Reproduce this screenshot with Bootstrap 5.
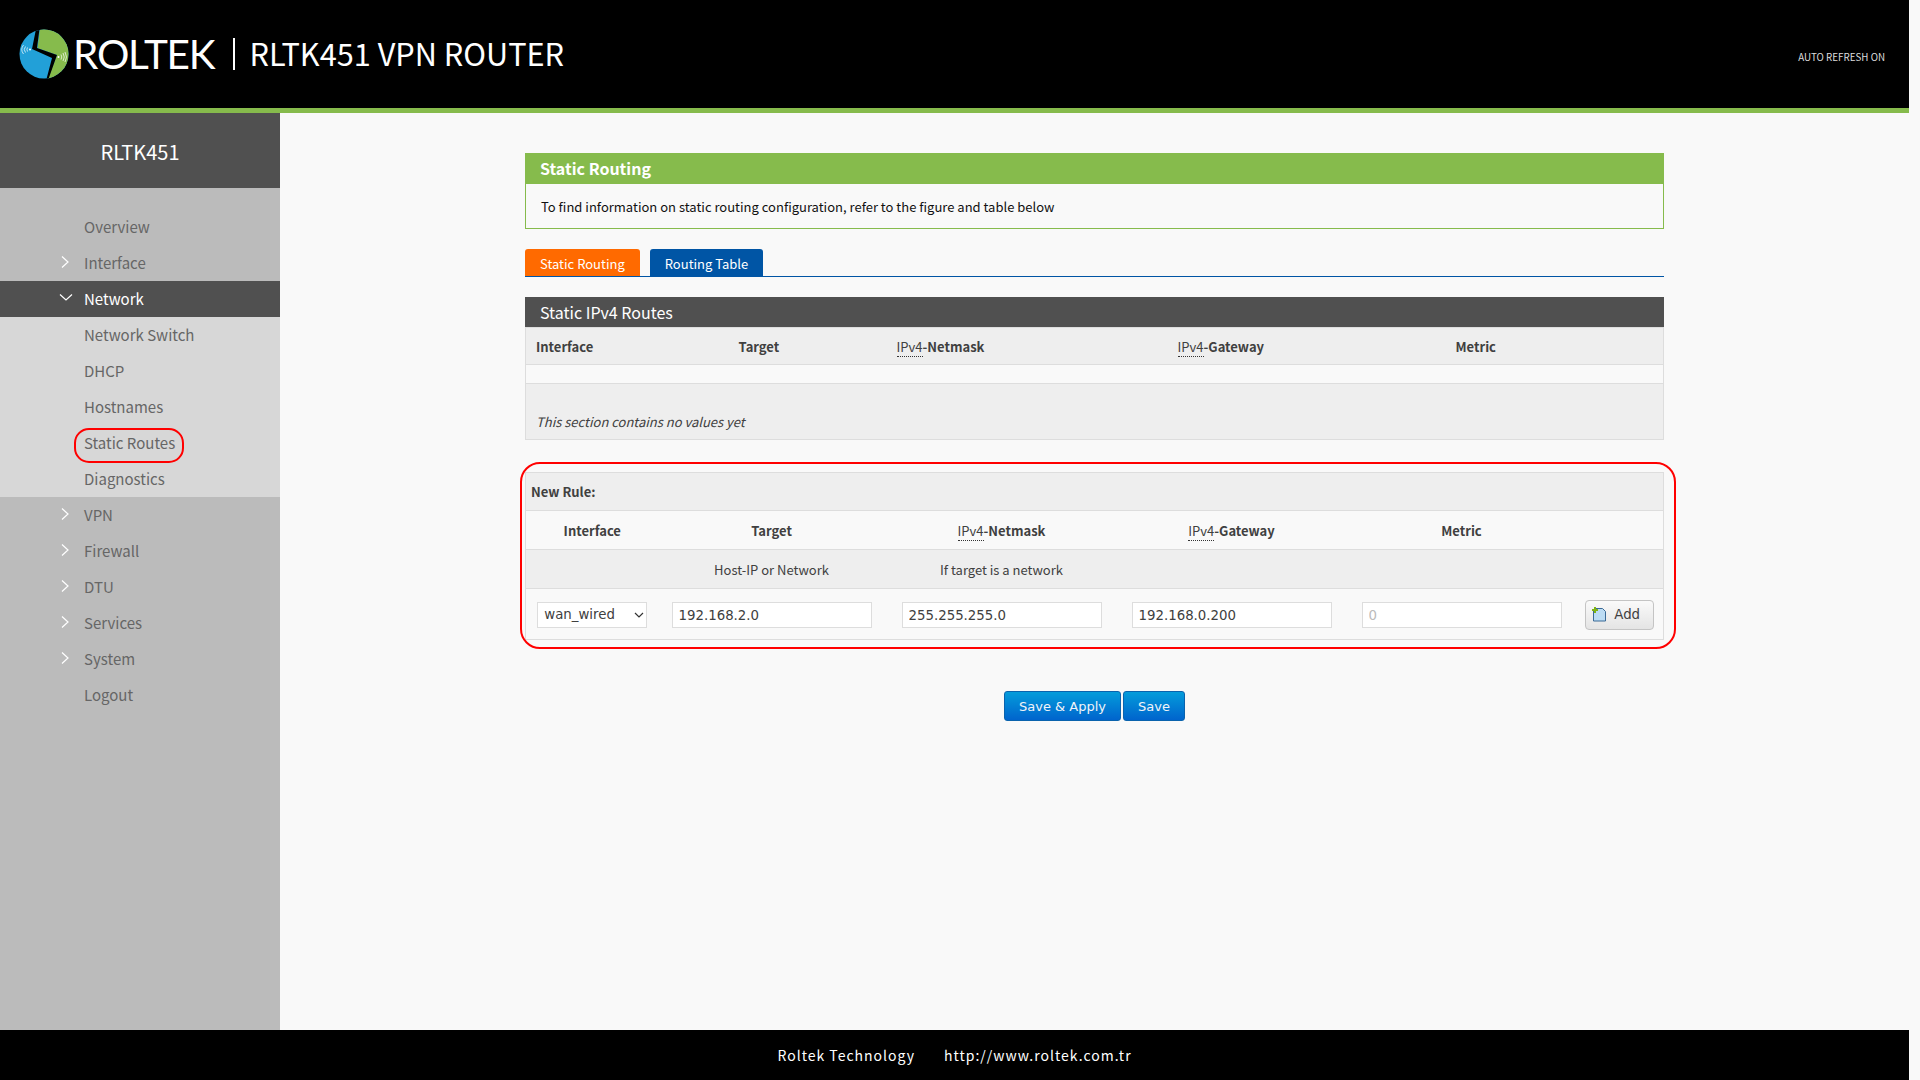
<!DOCTYPE html>
<html lang="en">
<head>
<meta charset="utf-8">
<title>RLTK451 VPN ROUTER</title>
<link href="https://cdn.jsdelivr.net/npm/bootstrap@5.3.0/dist/css/bootstrap.min.css" rel="stylesheet">
<style>
html,body{height:100%;}
body{background:#f9f9f9;font-family:"Noto Sans CJK SC","Noto Sans",sans-serif;font-size:13px;color:#404040;overflow:hidden;}
.page-shell{width:1909px;height:1030px;}
.top-bar{height:113px;background:#000;border-bottom:5px solid #86bb4c;padding:0 24px 0 19px;}
.logo-word{font-family:"Lato","Liberation Sans",sans-serif;font-size:40.5px;font-weight:400;color:#fff;letter-spacing:-1.2px;line-height:1;margin-left:4px;}
.logo-title{font-size:30.7px;color:#fff;line-height:1;margin-left:19px;border-left:2px solid #fff;padding:0 0 2px 14px;height:32px;display:flex;align-items:center;}
.refresh-note{font-size:9.8px;color:#ddd;padding-top:7px;}
.side-col{width:280px;background:#bbb;flex:none;}
.side-title{height:75px;background:#505050;color:#fff;font-size:20px;padding-top:2px;}
.side-list{padding-top:21px;}
.side-link{height:36px;display:flex;align-items:center;padding-left:84px;color:#666;font-size:15px;text-decoration:none;position:relative;}
.side-link svg{position:absolute;left:58px;top:10px;}
.side-link.now{background:#505050;color:#fff;}
.side-link.now svg{left:59px;}
.side-sub{background:#d7d7d7;}
.mark-route{position:absolute;left:74px;top:3px;width:110px;height:35px;border:2px solid #f00;border-radius:15px;pointer-events:none;}
.main-col{padding:40px 245px 0;}
.info-box{border:1px solid #86bb4c;height:76px;}
.info-head{background:#86bb4c;color:#fff;font-weight:600;font-size:16px;height:30px;padding-left:14px;line-height:29px;}
.info-body{color:#111;font-size:13px;padding:12px 15px;line-height:22px;}
.tab-row{margin-top:20px;border-bottom:1px solid #0055a5;height:28px;gap:10px;}
.tab-item{height:27px;color:#fff;font-size:13px;padding:0 15px;border-radius:3px 3px 0 0;line-height:29px;}
.tab-orange{background:#ff6a00;}
.tab-blue{background:#0055a5;}
.sect-head{margin-top:20px;background:#505050;color:#fff;font-size:16px;height:30px;line-height:30px;padding-left:15px;}
.grid-tab{width:100%;table-layout:fixed;border-collapse:collapse;border:1px solid #ddd;margin:0;}
.grid-tab td,.grid-tab th{border:0;padding:2px 10px 0;font-size:13px;color:#404040;vertical-align:middle;}
.grid-tab th{font-weight:700;}
.grid-tab .cell-flush{padding:2px 0 0;}
.grid-tab .cell-first{padding-left:2px;}
.grid-tab .cell-lead{padding-left:12px;padding-right:10px;}
.grid-tab .cell-left{padding:0 0 0 5px;}
.alt-row{background:#eee;}
.line-row{border-bottom:1px solid #ddd;}
.abbr-dot{font-weight:400;border-bottom:1px dotted #333;}
.empty-note{font-style:italic;padding-top:20px!important;}
.rule-wrap{position:relative;margin-top:32px;}
.mark-rule{position:absolute;left:-5px;right:-12px;top:-10px;bottom:-9px;border:2px solid #f00;border-radius:20px;pointer-events:none;}
.form-ctl{height:26px;border:1px solid #ddd;border-radius:0;background:#fff;font-family:"DejaVu Sans",sans-serif;font-size:13.33px;color:#404040;padding:0 6px;width:200px;box-shadow:none;vertical-align:middle;}
.form-ctl::placeholder{color:#bbb;}
.sel-ctl{width:110px;appearance:none;-webkit-appearance:none;background-image:url("data:image/svg+xml,%3Csvg xmlns='http://www.w3.org/2000/svg' width='10' height='6'%3E%3Cpath d='M1 1l4 4 4-4' fill='none' stroke='%23333' stroke-width='1.200'/%3E%3C/svg%3E");background-repeat:no-repeat;background-position:right 2px center;}
.add-btn{height:30px;width:69px;border:1px solid #c4c4c4;border-radius:4px;background:linear-gradient(#fafafa,#e4e4e4);font-family:"DejaVu Sans",sans-serif;font-size:13.33px;color:#404040;padding:0 0 1px 6px;gap:7px;}
.act-row{margin-top:51px;gap:2px;}
.act-btn{height:30px;border:1px solid #0a63ad;border-radius:3px;background:linear-gradient(#049cdb,#0064cd);color:#f0f4f8;font-family:"DejaVu Sans",sans-serif;font-size:13px;padding:1px 14px 0;}
.foot-bar{width:1909px;height:50px;background:#000;color:#fff;font-size:14px;letter-spacing:1px;gap:29px;}
</style>
</head>
<body>
<div class="page-shell d-flex flex-column">
  <header class="top-bar d-flex align-items-center justify-content-between flex-none">
    <div class="d-flex align-items-center">
      <svg width="50" height="50" viewBox="0 0 50 50">
        <defs><clipPath id="logoDisc"><ellipse cx="25" cy="25" rx="24.500" ry="24.500"/></clipPath></defs>
        <g clip-path="url(#logoDisc)">
          <rect width="50" height="50" fill="#22a0d8"/>
          <path d="M21 0L18.500 19L38 26L29 50L60 50L60 0Z" fill="#86bb4c"/>
          <path d="M20.500 0L18 19L38 26L29.500 50L27.500 50L33 29L13 20L17 0Z" fill="#000"/>
        </g>
        <path d="M6.500 17.500q-2.500 3 0 6M4.500 16q-3.500 4.500 0 9M8.500 18.500q-1.200 1.800 0 4" stroke="#fff" stroke-width=".7" fill="none"/>
        <circle cx="11" cy="20.500" r="1" fill="#fff"/>
        <circle cx="39.500" cy="28" r="1" fill="#fff"/>
        <path d="M42 25.500q1.500 2.500 0 5M44 24q2.500 4 0 8M46 23q3 5 0 10" stroke="#fff" stroke-width=".7" fill="none"/>
      </svg>
      <span class="logo-word">ROLTEK</span>
      <span class="logo-title">RLTK451 VPN ROUTER</span>
    </div>
    <span class="refresh-note">AUTO REFRESH ON</span>
  </header>
  <div class="d-flex flex-grow-1">
    <aside class="side-col">
      <div class="side-title d-flex align-items-center justify-content-center">RLTK451</div>
      <nav class="side-list">
        <a class="side-link">Overview</a>
        <a class="side-link"><svg width="12" height="14" viewBox="0 0 12 14"><path d="M4 1.500L10 7L4 12.500" fill="none" stroke="#fff" stroke-width="1.200"/></svg>Interface</a>
        <a class="side-link now"><svg width="14" height="12" viewBox="0 0 14 12"><path d="M1 3.500L7 9L13 3.500" fill="none" stroke="#fff" stroke-width="1.200"/></svg>Network</a>
        <div class="side-sub">
          <a class="side-link">Network Switch</a>
          <a class="side-link">DHCP</a>
          <a class="side-link">Hostnames</a>
          <a class="side-link">Static Routes<span class="mark-route"></span></a>
          <a class="side-link">Diagnostics</a>
        </div>
        <a class="side-link"><svg width="12" height="14" viewBox="0 0 12 14"><path d="M4 1.500L10 7L4 12.500" fill="none" stroke="#fff" stroke-width="1.200"/></svg>VPN</a>
        <a class="side-link"><svg width="12" height="14" viewBox="0 0 12 14"><path d="M4 1.500L10 7L4 12.500" fill="none" stroke="#fff" stroke-width="1.200"/></svg>Firewall</a>
        <a class="side-link"><svg width="12" height="14" viewBox="0 0 12 14"><path d="M4 1.500L10 7L4 12.500" fill="none" stroke="#fff" stroke-width="1.200"/></svg>DTU</a>
        <a class="side-link"><svg width="12" height="14" viewBox="0 0 12 14"><path d="M4 1.500L10 7L4 12.500" fill="none" stroke="#fff" stroke-width="1.200"/></svg>Services</a>
        <a class="side-link"><svg width="12" height="14" viewBox="0 0 12 14"><path d="M4 1.500L10 7L4 12.500" fill="none" stroke="#fff" stroke-width="1.200"/></svg>System</a>
        <a class="side-link">Logout</a>
      </nav>
    </aside>
    <main class="main-col flex-grow-1">
      <section class="info-box">
        <div class="info-head">Static Routing</div>
        <div class="info-body">To find information on static routing configuration, refer to the figure and table below</div>
      </section>
      <div class="tab-row d-flex">
        <div class="tab-item tab-orange">Static Routing</div>
        <div class="tab-item tab-blue">Routing Table</div>
      </div>
      <div class="sect-head">Static IPv4 Routes</div>
      <table class="grid-tab">
        <colgroup><col style="width:203px"><col style="width:158px"><col style="width:281px"><col style="width:278px"><col></colgroup>
        <tr class="alt-row line-row" style="height:37px">
          <th>Interface</th><th>Target</th><th><span class="abbr-dot">IPv4</span>-Netmask</th><th><span class="abbr-dot">IPv4</span>-Gateway</th><th>Metric</th>
        </tr>
        <tr class="line-row" style="height:19px"><td colspan="5"></td></tr>
        <tr class="alt-row" style="height:56px"><td colspan="5" class="empty-note">This section contains no values yet</td></tr>
      </table>
      <div class="rule-wrap">
        <span class="mark-rule"></span>
        <table class="grid-tab text-center">
          <colgroup><col style="width:131px"><col style="width:230px"><col style="width:230px"><col style="width:230px"><col style="width:230px"><col></colgroup>
          <tr class="alt-row line-row" style="height:38px"><th colspan="6" class="text-start cell-left">New Rule:</th></tr>
          <tr class="line-row" style="height:39px">
            <th class="cell-lead">Interface</th><th>Target</th><th><span class="abbr-dot">IPv4</span>-Netmask</th><th><span class="abbr-dot">IPv4</span>-Gateway</th><th>Metric</th><th></th>
          </tr>
          <tr class="alt-row line-row" style="height:39px"><td></td><td>Host-IP or Network</td><td>If target is a network</td><td></td><td></td><td></td></tr>
          <tr style="height:51px">
            <td class="cell-flush cell-first"><select class="form-ctl sel-ctl"><option>wan_wired</option></select></td>
            <td class="cell-flush"><input class="form-ctl" value="192.168.2.0"></td>
            <td class="cell-flush"><input class="form-ctl" value="255.255.255.0"></td>
            <td class="cell-flush"><input class="form-ctl" value="192.168.0.200"></td>
            <td class="cell-flush"><input class="form-ctl" placeholder="0"></td>
            <td class="cell-flush"><button class="add-btn d-inline-flex align-items-center justify-content-start" type="button">
              <svg width="15" height="15" viewBox="0 0 15 15"><path d="M3.500 1.500H10.500L13.500 4.500V14H1.500V3.500Z" fill="#bcdcf4" stroke="#3b6a96"/><path d="M3 0V6M0 3H6" stroke="#7fb314" stroke-width="2"/></svg>Add</button></td>
          </tr>
        </table>
      </div>
      <div class="act-row d-flex justify-content-center">
        <button class="act-btn" type="button">Save &amp; Apply</button>
        <button class="act-btn" type="button">Save</button>
      </div>
    </main>
  </div>
</div>
<footer class="foot-bar d-flex align-items-center justify-content-center">
  <span>Roltek Technology</span><span>http://www.roltek.com.tr</span>
</footer>
<script src="https://cdn.jsdelivr.net/npm/bootstrap@5.3.0/dist/js/bootstrap.bundle.min.js"></script>
</body>
</html>
